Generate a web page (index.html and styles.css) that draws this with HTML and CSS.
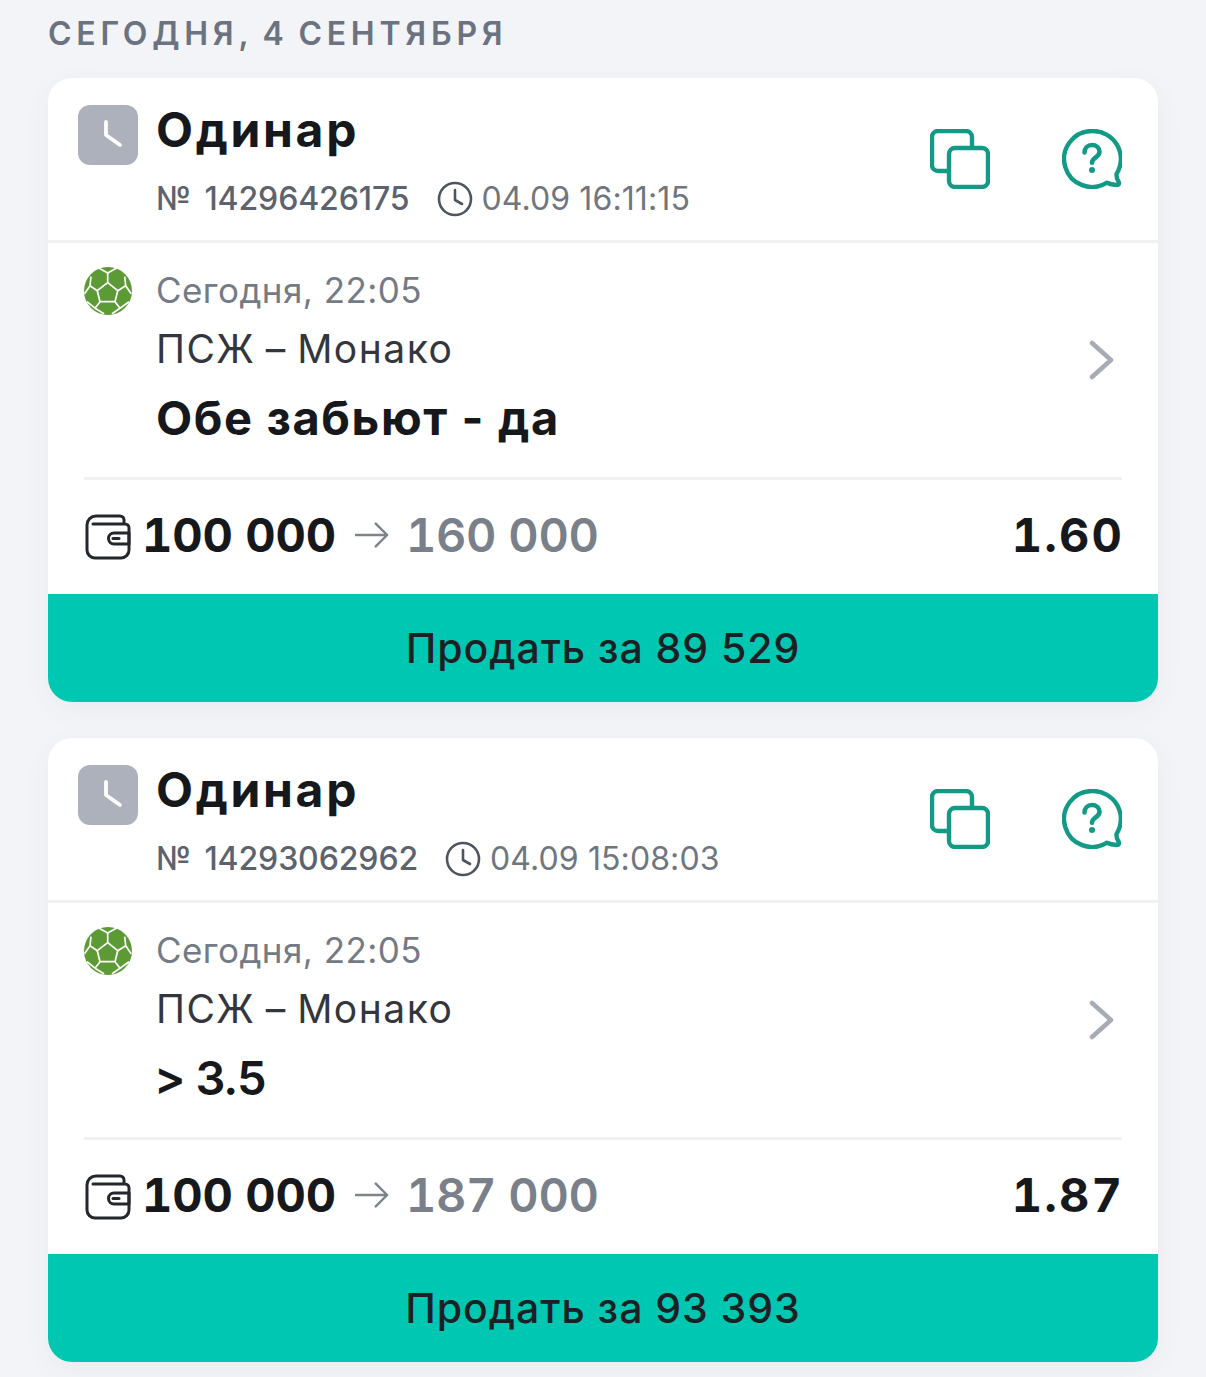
FILE: index.html
```html
<!DOCTYPE html>
<html lang="ru">
<head>
<meta charset="utf-8">
<title>Ставки</title>
<link rel="stylesheet" href="styles.css">
</head>
<body>
<svg class="sprite" width="0" height="0" aria-hidden="true">
  <defs>
    <symbol id="ball" viewBox="0 0 48 48">
      <circle cx="24" cy="24" r="24" fill="#5c9a35"/>
      <g fill="none" stroke="#fff" stroke-width="1.700" stroke-linejoin="round">
        <path d="M23.700 15.700l10 8L31 34.700H16l-2.700-11z"/>
        <path d="M23.700 15.700V6M33.700 23.700l8-5M31 34.700l5 6.500M16 34.700l-5 6.500M13.300 23.700l-7.300-5"/>
        <path d="M23.700 6l-9-5M23.700 6l9-5M41.700 18.700l-1-9M41.700 18.700l5.500 8M36 41.200l9-6.500M36 41.200l-8 5.500M11 41.200l-8-6.500M11 41.200l9 5.500M6 18.700l1-9M6 18.700l-5.500 8"/>
      </g>
    </symbol>
    <symbol id="copy" viewBox="0 0 60 60">
      <g fill="none" stroke="#129a86" stroke-width="4.400" stroke-linejoin="round">
        <path d="M17 42H8a6 6 0 0 1-6-6V8a6 6 0 0 1 6-6h28a6 6 0 0 1 6 6v9"/>
        <rect x="19" y="19" width="39" height="39" rx="6"/>
      </g>
    </symbol>
    <symbol id="help" viewBox="0 0 60 60">
      <path d="M30 2a28 28 0 1 0 15 51.700c2 1 5.500 2 9.500 2.300 2.500 0 3-1.500 2-3.500-1.500-2.500-2.300-5-2-7.500A28 28 0 0 0 30 2z" fill="none" stroke="#129a86" stroke-width="4.400" stroke-linejoin="round"/>
      <path d="M22.500 23.500c0-4.500 3.300-7.500 7.500-7.500s7.500 2.800 7.500 6.800c0 5.700-7.500 5.500-7.500 11" fill="none" stroke="#129a86" stroke-width="4.600" stroke-linecap="round"/>
      <circle cx="30" cy="41" r="3" fill="#129a86"/>
    </symbol>
    <symbol id="wallet" viewBox="0 0 46 46">
      <g fill="none" stroke="#24272c" stroke-width="3" stroke-linejoin="round" stroke-linecap="round">
        <path d="M39 10V6a4 4 0 0 0-4-4H11a9 9 0 0 0-9 9v25a8 8 0 0 0 8 8h26a8 8 0 0 0 8-8V14a4 4 0 0 0-4-4H8"/>
        <path d="M44 19H29a5.500 5.500 0 0 0 0 11h15z"/>
        <path d="M28 24.500h6"/>
      </g>
    </symbol>
  </defs>
</svg>

<main class="page">
  <h2 class="day">Сегодня, 4 сентября</h2>

  <article class="card">
    <header class="head">
      <div class="status">
        <svg viewBox="0 0 60 60" class="status-icon"><rect width="60" height="60" rx="12" fill="#acb1bc"/><path d="M28 17v13l14 10" fill="none" stroke="#fff" stroke-width="3.800" stroke-linecap="round" stroke-linejoin="round"/></svg>
      </div>
      <div class="head-main">
        <h3 class="title">Одинар</h3>
        <p class="meta">
          <span class="number">№ 14296426175</span>
          <svg class="clock" viewBox="0 0 36 36"><circle cx="18" cy="18" r="16" fill="none" stroke="#4e5560" stroke-width="2.600"/><path d="M18 9v10l7 4" fill="none" stroke="#4e5560" stroke-width="2.600" stroke-linecap="round" stroke-linejoin="round"/></svg>
          <span class="time">04.09 16:11:15</span>
        </p>
      </div>
      <svg class="act act-copy"><use href="#copy"/></svg>
      <svg class="act act-help"><use href="#help"/></svg>
    </header>
    <section class="event">
      <svg class="ball"><use href="#ball"/></svg>
      <div class="event-main">
        <div class="when">Сегодня, 22:05</div>
        <div class="teams">ПСЖ – Монако</div>
        <div class="pick">Обе забьют - да</div>
      </div>
      <svg class="chev" viewBox="0 0 26 40"><path d="M3 3l19 17L3 37" fill="none" stroke="#a6abb4" stroke-width="4.500" stroke-linecap="round" stroke-linejoin="round"/></svg>
    </section>
    <section class="sum">
      <svg class="wallet"><use href="#wallet"/></svg>
      <span class="stake">100 000</span>
      <svg class="arrow" viewBox="0 0 36 28"><path d="M1 14h33M22 2l12 12-12 12" fill="none" stroke="#7d838b" stroke-width="2.600" stroke-linecap="round" stroke-linejoin="round"/></svg>
      <span class="win">160 000</span>
      <span class="odds">1.60</span>
    </section>
    <button class="sell">Продать за 89 529</button>
  </article>

  <article class="card">
    <header class="head">
      <div class="status">
        <svg viewBox="0 0 60 60" class="status-icon"><rect width="60" height="60" rx="12" fill="#acb1bc"/><path d="M28 17v13l14 10" fill="none" stroke="#fff" stroke-width="3.800" stroke-linecap="round" stroke-linejoin="round"/></svg>
      </div>
      <div class="head-main">
        <h3 class="title">Одинар</h3>
        <p class="meta">
          <span class="number">№ 14293062962</span>
          <svg class="clock" viewBox="0 0 36 36"><circle cx="18" cy="18" r="16" fill="none" stroke="#4e5560" stroke-width="2.600"/><path d="M18 9v10l7 4" fill="none" stroke="#4e5560" stroke-width="2.600" stroke-linecap="round" stroke-linejoin="round"/></svg>
          <span class="time">04.09 15:08:03</span>
        </p>
      </div>
      <svg class="act act-copy"><use href="#copy"/></svg>
      <svg class="act act-help"><use href="#help"/></svg>
    </header>
    <section class="event">
      <svg class="ball"><use href="#ball"/></svg>
      <div class="event-main">
        <div class="when">Сегодня, 22:05</div>
        <div class="teams">ПСЖ – Монако</div>
        <div class="pick pick-num">&gt; 3.5</div>
      </div>
      <svg class="chev" viewBox="0 0 26 40"><path d="M3 3l19 17L3 37" fill="none" stroke="#a6abb4" stroke-width="4.500" stroke-linecap="round" stroke-linejoin="round"/></svg>
    </section>
    <section class="sum">
      <svg class="wallet"><use href="#wallet"/></svg>
      <span class="stake">100 000</span>
      <svg class="arrow" viewBox="0 0 36 28"><path d="M1 14h33M22 2l12 12-12 12" fill="none" stroke="#7d838b" stroke-width="2.600" stroke-linecap="round" stroke-linejoin="round"/></svg>
      <span class="win">187 000</span>
      <span class="odds">1.87</span>
    </section>
    <button class="sell">Продать за 93 393</button>
  </article>
</main>
</body>
</html>
```

FILE: styles.css
```css
* { box-sizing: border-box; }
html, body { margin: 0; padding: 0; }
body {
  background: #f3f4f7;
  font-family: "Inter", "Noto Sans", sans-serif;
  color: #16181c;
  height: 1377px;
  overflow: hidden;
}
.sprite { position: absolute; }
.page { padding: 0 48px; display: flex; flex-direction: column; gap: 36px; }
.day {
  margin: 0 0 -16px;
  height: 58px;
  padding-top: 15px;
  font-size: 32px;
  line-height: 38px;
  font-weight: 600;
  letter-spacing: 4.750px;
  word-spacing: -3px;
  text-transform: uppercase;
  color: #6b7280;
}
.card {
  background: #fff;
  border-radius: 24px;
  box-shadow: 0 8px 28px rgba(60, 70, 90, .05);
  height: 624px;
  display: flex;
  flex-direction: column;
  overflow: hidden;
}
.head {
  height: 165px;
  flex: none;
  padding: 27px 36px 0 30px;
  display: flex;
  align-items: flex-start;
  border-bottom: 3px solid #f0f1f3;
}
.status { width: 60px; height: 60px; flex: none; margin-right: 18px; }
.status-icon { display: block; width: 60px; height: 60px; }
.head-main { flex: 1; min-width: 0; }
.title {
  margin: -3px 0 0;
  font-size: 48px;
  line-height: 56px;
  font-weight: 700;
  letter-spacing: 2.700px;
}
.meta {
  margin: 22px 0 0;
  display: flex;
  align-items: center;
  font-size: 32px;
  line-height: 38px;
  color: #5c636e;
}
.number { font-weight: 500; letter-spacing: -0.100px; word-spacing: 5px; margin-right: 27px; }
.clock { width: 36px; height: 36px; flex: none; margin-right: 9px; }
.time { color: #6f7680; letter-spacing: 0.100px; }
.act { flex: none; width: 60px; height: 60px; margin-top: 24px; overflow: visible; }
.act-help { margin-left: 72px; }
.event {
  height: 237px;
  flex: none;
  margin: 0 36px;
  padding-top: 23px;
  display: flex;
  align-items: flex-start;
  border-bottom: 3px solid #f0f1f3;
  position: relative;
}
.ball { width: 48px; height: 48px; flex: none; margin: 1px 24px 0 0; }
.event-main { flex: 1; min-width: 0; }
.when { font-size: 35px; line-height: 48px; color: #747b85; letter-spacing: 0.450px; }
.teams { font-size: 39px; line-height: 48px; margin-top: 11px; color: #33373d; letter-spacing: 1.500px; word-spacing: -2px; }
.pick { font-size: 47px; line-height: 56px; font-weight: 700; margin-top: 17px; letter-spacing: 1.600px; }
.pick-num { font-weight: 600; letter-spacing: -1px; margin-left: -2px; }
.chev { width: 26px; height: 40px; flex: none; margin: 74px 7px 0 0; }
.sum {
  flex: 1;
  margin: 0 36px;
  padding-bottom: 4px;
  display: flex;
  align-items: center;
}
.wallet { width: 46px; height: 46px; flex: none; margin: 3px 11px 0 1px; }
.stake, .win, .odds { font-size: 47px; font-weight: 700; line-height: 56px; font-variant-numeric: tabular-nums; }
.stake { letter-spacing: -0.150px; }
.arrow { width: 34px; height: 28px; flex: none; margin: 0 17px 0 19px; }
.win { color: #7a808a; font-weight: 600; letter-spacing: -0.350px; }
.odds { margin-left: auto; margin-right: -2px; letter-spacing: 2.100px; }
.sell {
  height: 108px;
  flex: none;
  width: 100%;
  border: 0;
  background: #00c7b1;
  color: #1a2024;
  font-family: inherit;
  font-size: 41px;
  font-weight: 500;
  letter-spacing: 0.950px;
}
```
